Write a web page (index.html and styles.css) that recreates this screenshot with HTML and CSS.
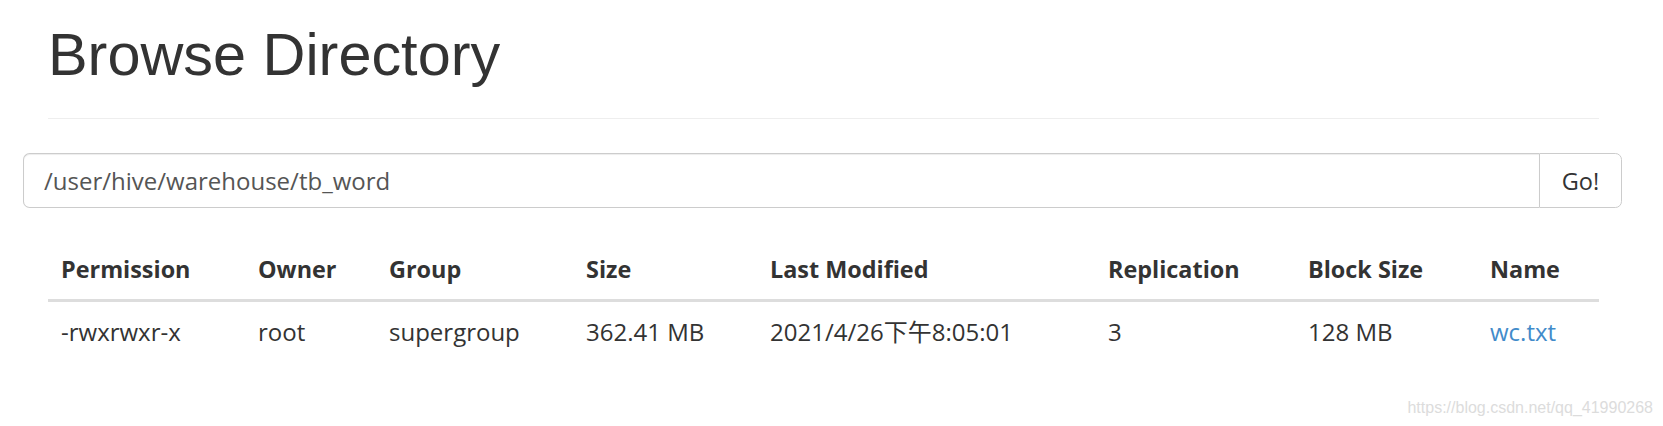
FILE: index.html
```html
<!DOCTYPE html>
<html lang="en">
<head>
<meta charset="utf-8">
<title>Browse Directory</title>
<link rel="stylesheet" href="styles.css">
</head>
<body>
<div class="container">
  <div class="page-header">
    <h1>Browse Directory</h1>
  </div>
  <form class="nav-form" onsubmit="return false;">
    <div class="input-group">
      <input type="text" class="form-control" value="/user/hive/warehouse/tb_word">
      <button class="btn" type="button">Go!</button>
    </div>
  </form>
  <table class="table">
    <thead>
      <tr>
        <th class="c-perm">Permission</th>
        <th class="c-owner">Owner</th>
        <th class="c-group">Group</th>
        <th class="c-size">Size</th>
        <th class="c-mod">Last Modified</th>
        <th class="c-rep">Replication</th>
        <th class="c-block">Block Size</th>
        <th class="c-name">Name</th>
      </tr>
    </thead>
    <tbody>
      <tr>
        <td>-rwxrwxr-x</td>
        <td>root</td>
        <td>supergroup</td>
        <td>362.41 MB</td>
        <td>2021/4/26下午8:05:01</td>
        <td>3</td>
        <td>128 MB</td>
        <td><a href="#">wc.txt</a></td>
      </tr>
    </tbody>
  </table>
</div>
<div class="watermark">https://blog.csdn.net/qq_41990268</div>
</body>
</html>
```
FILE: styles.css
```css
html, body {
  margin: 0;
  padding: 0;
  background: #fff;
}
body {
  position: relative;
  min-height: 426px;
  font-family: "Open Sans", "Noto Sans CJK SC", sans-serif;
  font-size: 24px;
  color: #333;
}
.container {
  margin-left: 48px;
  width: 1551px;
}
.page-header {
  border-bottom: 1px solid #eee;
  padding-bottom: 15px;
  margin-bottom: 34px;
}
.page-header h1 {
  margin: 22px 0 16px;
  font-family: "Liberation Sans", Arial, sans-serif;
  font-size: 59.4px;
  font-weight: normal;
  line-height: 1.1;
  color: #333;
}
.nav-form {
  margin: 0 0 0 -25px;
  width: 1599px;
}
.input-group {
  display: flex;
  height: 55px;
}
.form-control {
  flex: 1;
  min-width: 0;
  height: 55px;
  box-sizing: border-box;
  padding: 0 20px;
  border: 1px solid #ccc;
  border-right: none;
  border-radius: 6.6px 0 0 6.6px;
  box-shadow: inset 0 1px 1px rgba(0, 0, 0, 0.075);
  font-family: "Open Sans", "Noto Sans CJK SC", sans-serif;
  font-size: 24px;
  color: #555;
  background: #fff;
  outline: none;
}
.btn {
  width: 83px;
  height: 55px;
  box-sizing: border-box;
  border: 1px solid #ccc;
  border-radius: 0 6.6px 6.6px 0;
  background: #fff;
  font-family: "Open Sans", "Noto Sans CJK SC", sans-serif;
  font-size: 23.5px;
  color: #333;
  padding: 0;
}
.table {
  margin-top: 32px;
  width: 1551px;
  border-collapse: collapse;
  table-layout: fixed;
}
.table th,
.table td {
  box-sizing: border-box;
  padding: 13px;
  line-height: 33px;
  text-align: left;
  white-space: nowrap;
}
.table th {
  font-size: 23.4px;
  font-weight: 700;
  vertical-align: bottom;
  border-bottom: 3px solid #ddd;
}
.table td {
  vertical-align: top;
}
.c-perm { width: 197px; }
.c-owner { width: 131px; }
.c-group { width: 197px; }
.c-size { width: 184px; }
.c-mod { width: 338px; }
.c-rep { width: 200px; }
.c-block { width: 182px; }
.c-name { width: 122px; }
.table a {
  color: #428bca;
  text-decoration: none;
}
.watermark {
  position: absolute;
  right: 10px;
  top: 400px;
  font-family: "Liberation Sans", Arial, sans-serif;
  font-size: 16px;
  line-height: 16px;
  color: #dcdcdc;
}
```
